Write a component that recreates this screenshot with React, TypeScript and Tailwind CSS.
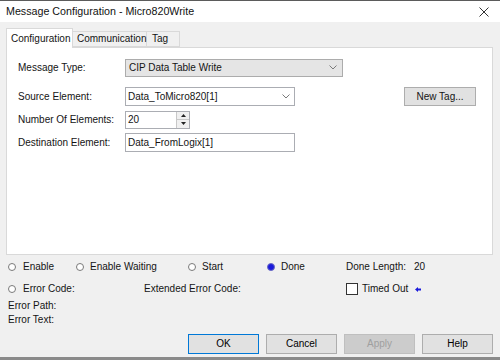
import React from "react";

function Radio({ checked = false }: { checked?: boolean }) {
  return (
    <span
      className={
        checked
          ? "w-[8px] h-[8px] rounded-full bg-[#1a1adb] border border-[#6b6bc4] shrink-0"
          : "w-[8px] h-[8px] rounded-full bg-white border border-[#7a7a7a] shrink-0"
      }
    />
  );
}

function Chevron() {
  return (
    <svg width="8" height="5" viewBox="0 0 8 5" className="shrink-0">
      <polyline points="0.5,0.5 4,4 7.5,0.5" fill="none" stroke="#7a7a7a" strokeWidth="1" />
    </svg>
  );
}

function Button({ label, primary, disabled }: { label: string; primary?: boolean; disabled?: boolean }) {
  let cls = "w-[71px] h-[20px] flex items-center justify-center border ";
  if (disabled) cls += "bg-[#cccccc] border-[#bfbfbf] text-[#9f9f9f]";
  else if (primary) cls += "bg-[#e1e1e1] border-[#0078d7] text-black";
  else cls += "bg-[#e1e1e1] border-[#adadad] text-black";
  return <div className={cls}>{label}</div>;
}

export default function App() {
  return (
    <div className="w-[500px] h-[360px] flex flex-col bg-[#f0f0f0] border-t border-[#5b5b5b] border-b-[3px] border-b-[#8a8a8a] font-['Liberation_Sans',Arial,sans-serif] text-[10px] text-[#141414] leading-none overflow-hidden">
      {/* title bar */}
      <div className="h-[21px] bg-white flex items-center justify-between pl-[6px] pr-[11px] shrink-0">
        <span className="text-[10.7px] text-[#111]">Message Configuration - Micro820Write</span>
        <svg width="10" height="10" viewBox="0 0 10 10">
          <path d="M0.5 0.5 L9.5 9.5 M9.5 0.5 L0.5 9.5" stroke="#333" strokeWidth="1" />
        </svg>
      </div>

      {/* tabs */}
      <div className="flex items-end pl-[6px] mt-[6px] h-[19px] shrink-0 relative z-10">
        <div className="w-[67px] h-[20px] bg-white border border-b-0 border-[#d9d9d9] flex items-center pl-[4px] mb-[-1px]">
          Configuration
        </div>
        <div className="w-[74px] h-[16px] border border-l-0 border-[#d9d9d9] flex items-center pl-[4px]">
          Communication
        </div>
        <div className="w-[33px] h-[16px] border border-l-0 border-[#d9d9d9] flex items-center pl-[5px]">
          Tag
        </div>
      </div>

      {/* panel */}
      <div className="ml-[6px] w-[487px] h-[208px] bg-white border border-[#d9d9d9] flex flex-col pl-[11px] pt-[10px] shrink-0">
        <div className="flex items-center h-[19px]">
          <span className="w-[107px]">Message Type:</span>
          <div className="w-[218px] h-[18px] bg-[#e5e5e5] border border-[#acacac] flex items-center justify-between pl-[3px] pr-[5px]">
            <span>CIP Data Table Write</span>
            <Chevron />
          </div>
        </div>
        <div className="flex items-center h-[19px] mt-[10px]">
          <span className="w-[107px]">Source Element:</span>
          <div className="w-[170px] h-[19px] bg-white border border-[#abadb3] flex items-center justify-between pl-[2px] pr-[4px]">
            <span>Data_ToMicro820[1]</span>
            <Chevron />
          </div>
          <div className="ml-[109px] w-[72px] h-[19px] bg-[#e1e1e1] border border-[#adadad] flex items-center justify-center">
            New Tag...
          </div>
        </div>
        <div className="flex items-center h-[19px] mt-[4px]">
          <span className="w-[107px]">Number Of Elements:</span>
          <div className="w-[65px] h-[18px] bg-white border border-[#abadb3] flex items-stretch justify-between pl-[2px]">
            <span className="self-center">20</span>
            <div className="w-[13px] flex flex-col border-l border-[#c8c8c8] bg-[#f0f0f0]">
              <div className="flex-1 flex items-center justify-center border-b border-[#c8c8c8]">
                <svg width="5" height="3" viewBox="0 0 5 3">
                  <polygon points="0,3 2.5,0 5,3" fill="#222" />
                </svg>
              </div>
              <div className="flex-1 flex items-center justify-center">
                <svg width="5" height="3" viewBox="0 0 5 3">
                  <polygon points="0,0 2.5,3 5,0" fill="#222" />
                </svg>
              </div>
            </div>
          </div>
        </div>
        <div className="flex items-center h-[19px] mt-[4px]">
          <span className="w-[107px]">Destination Element:</span>
          <div className="w-[170px] h-[19px] bg-white border border-[#abadb3] flex items-center pl-[2px]">
            <span>Data_FromLogix[1]</span>
          </div>
        </div>
      </div>

      {/* status */}
      <div className="flex flex-col pl-[8px] shrink-0">
        <div className="flex items-center h-[14px] mt-[5px]">
          <div className="w-[68px] flex items-center gap-[7px]">
            <Radio />
            <span>Enable</span>
          </div>
          <div className="w-[112px] flex items-center gap-[6px]">
            <Radio />
            <span>Enable Waiting</span>
          </div>
          <div className="w-[79px] flex items-center gap-[6px]">
            <Radio />
            <span>Start</span>
          </div>
          <div className="w-[79px] flex items-center gap-[6px]">
            <Radio checked />
            <span>Done</span>
          </div>
          <span className="w-[68px]">Done Length:</span>
          <span>20</span>
        </div>
        <div className="flex items-center h-[14px] mt-[8px]">
          <div className="w-[136px] flex items-center gap-[7px]">
            <Radio />
            <span>Error Code:</span>
          </div>
          <span className="w-[202px]">Extended Error Code:</span>
          <span className="w-[12px] h-[12px] border border-[#333] bg-white mr-[4px]" />
          <span className="w-[53px]">Timed Out</span>
          <svg width="6" height="5" viewBox="0 0 6 5">
            <polygon points="0,2.5 3,0 3,1.5 6,1.5 6,3.5 3,3.5 3,5" fill="#1a1adb" />
          </svg>
        </div>
        <div className="h-[14px] mt-[3px] flex items-center">Error Path:</div>
        <div className="h-[14px] flex items-center">Error Text:</div>
      </div>

      {/* buttons */}
      <div className="flex justify-end gap-[7px] pr-[7px] mt-[7px] shrink-0">
        <Button label="OK" primary />
        <Button label="Cancel" />
        <Button label="Apply" disabled />
        <Button label="Help" />
      </div>
    </div>
  );
}
